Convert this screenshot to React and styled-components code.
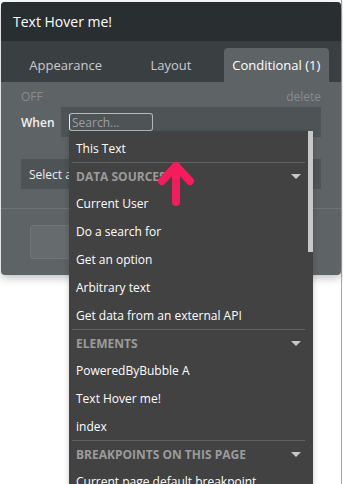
import React from "react"
import styled, { createGlobalStyle } from "styled-components"

const GlobalStyle = createGlobalStyle`
  html, body {
    margin: 0;
    padding: 0;
    background: #ffffff;
    font-family: "Open Sans", "DejaVu Sans", sans-serif;
  }
`

const Page = styled.div`
  width: 343px;
  height: 484px;
  padding: 2px 2px 0 1px;
  box-sizing: border-box;
  position: relative;
  overflow: hidden;
  background: linear-gradient(
    to right,
    transparent 341px,
    #a9a9a9 341px,
    #a9a9a9 342px,
    transparent 342px
  );
`

const Panel = styled.div`
  position: relative;
  width: 340px;
  border-radius: 4px;
  background: #5e6366;
  box-shadow: 0 3px 8px rgba(0, 0, 0, 0.25);
`

const TitleBar = styled.div`
  height: 39px;
  display: flex;
  align-items: center;
  padding-left: 12px;
  background: #292e30;
  border-radius: 4px 4px 0 0;
  color: #ffffff;
  font-size: 14px;
`

const Tabs = styled.div`
  height: 41px;
  display: grid;
  grid-template-columns: repeat(3, 1fr);
  padding: 7px 12px 0;
  box-sizing: border-box;
  background: #3a3f42;
`

const Tab = styled.div`
  display: flex;
  align-items: center;
  justify-content: center;
  border-radius: 4px 4px 0 0;
  font-size: 13px;
  color: ${(p) => (p.$active ? "#ffffff" : "#c9ccce")};
  background: ${(p) => (p.$active ? "#5e6366" : "transparent")};
`

const Body = styled.div`
  padding: 6px 20px 16px;
  display: flex;
  flex-direction: column;
`

const StatusRow = styled.div`
  display: flex;
  justify-content: space-between;
  font-size: 12px;
  color: #868b8e;
  height: 19px;
  line-height: 18px;
`

const WhenRow = styled.div`
  display: flex;
  align-items: center;
  height: 30px;
`

const Label = styled.div`
  width: 40px;
  font-size: 12px;
  font-weight: 600;
  color: #f2f2f2;
`

const Field = styled.div`
  flex: 1;
  height: 30px;
  background: #4e5356;
  display: flex;
  align-items: center;
  padding-left: 8px;
`

const Search = styled.div`
  width: 84px;
  height: 18px;
  box-sizing: border-box;
  border: 1px solid #b4b8ba;
  border-left-color: #ececec;
  border-radius: 3px;
  display: flex;
  align-items: center;
  padding-left: 2px;
  font-size: 12px;
  color: #9a9fa2;
`

const SelectRow = styled.div`
  margin-top: 22px;
  height: 30px;
  background: #4e5356;
  display: flex;
  align-items: center;
  padding-left: 8px;
  font-size: 12px;
  color: #eeeeee;
`

const Divider = styled.div`
  margin: 19px -20px 0;
  height: 1px;
  background: #6d7275;
`

const Button = styled.div`
  margin: 16px 29px 0 9px;
  height: 34px;
  box-sizing: border-box;
  border: 1px solid #707578;
  border-radius: 3px;
  background: #666b6e;
`

const Dropdown = styled.div`
  position: absolute;
  left: 69px;
  top: 131px;
  width: 244px;
  height: 360px;
  background: #424242;
  overflow: hidden;
  box-shadow: 0 2px 6px rgba(0, 0, 0, 0.2);
`

const Scrollbar = styled.div`
  position: absolute;
  right: 0;
  top: 0;
  width: 5px;
  height: 121px;
  background: #c8c8c8;
`

const List = styled.div`
  padding: 3px 8px 0 3px;
`

const Item = styled.div`
  height: 28px;
  display: flex;
  align-items: center;
  padding-left: 4px;
  font-size: 12px;
  color: #ffffff;
  white-space: nowrap;
`

const Header = styled.div`
  height: 27px;
  box-sizing: border-box;
  display: flex;
  align-items: center;
  justify-content: space-between;
  padding: 0 4px;
  border-top: 1px solid #5f6366;
  font-size: 12px;
  font-weight: 700;
  color: #9b9b9b;
  text-transform: uppercase;
`

const Caret = styled.span`
  width: 0;
  height: 0;
  border-left: 5px solid transparent;
  border-right: 5px solid transparent;
  border-top: 5px solid #c8c8c8;
`

const Arrow = styled.svg`
  position: absolute;
  left: 155px;
  top: 160px;
`

const groups = [
  { title: null, items: ["This Text"] },
  {
    title: "Data sources",
    items: [
      "Current User",
      "Do a search for",
      "Get an option",
      "Arbitrary text",
      "Get data from an external API",
    ],
  },
  { title: "Elements", items: ["PoweredByBubble A", "Text Hover me!", "index"] },
  { title: "Breakpoints on this page", items: ["Current page default breakpoint"] },
]

export default function App() {
  return (
    <>
      <GlobalStyle />
      <Page>
        <Panel>
          <TitleBar>Text Hover me!</TitleBar>
          <Tabs>
            <Tab>Appearance</Tab>
            <Tab>Layout</Tab>
            <Tab $active>Conditional (1)</Tab>
          </Tabs>
          <Body>
            <StatusRow>
              <span>OFF</span>
              <span>delete</span>
            </StatusRow>
            <WhenRow>
              <Label>When</Label>
              <Field>
                <Search>Search...</Search>
              </Field>
            </WhenRow>
            <SelectRow>Select a</SelectRow>
            <Divider />
            <Button />
          </Body>
        </Panel>
        <Dropdown>
          <List>
            {groups.map((g, i) => (
              <React.Fragment key={i}>
                {g.title && (
                  <Header>
                    {g.title}
                    <Caret />
                  </Header>
                )}
                {g.items.map((it) => (
                  <Item key={it}>{it}</Item>
                ))}
              </React.Fragment>
            ))}
          </List>
          <Scrollbar />
        </Dropdown>
        <Arrow width="44" height="48" viewBox="0 0 44 48">
          <g stroke="#f41c5c" strokeWidth="8" strokeLinecap="round" strokeLinejoin="round" fill="none">
            <path d="M21 42 V6" />
            <path d="M7 21 L21 6 L35 21" />
          </g>
        </Arrow>
      </Page>
    </>
  )
}
